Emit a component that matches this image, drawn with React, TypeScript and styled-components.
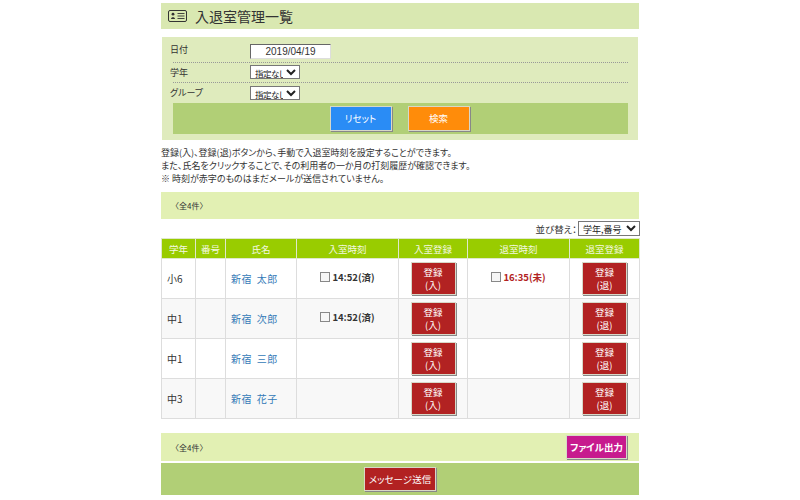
import React from 'react'
import styled, { createGlobalStyle } from 'styled-components'

const GlobalStyle = createGlobalStyle`
  html, body {
    margin: 0;
    padding: 0;
    background: #fff;
    font-family: "Noto Sans CJK JP", "Liberation Sans", sans-serif;
    font-size: 10px;
    color: #333;
    font-feature-settings: "palt";
  }
`

const Page = styled.div`
  width: 478px;
  margin: 0 auto;
  padding-top: 3px;
`

const TitleBar = styled.h1`
  display: flex;
  align-items: center;
  gap: 7px;
  height: 26px;
  margin: 0 0 8px;
  padding-left: 7px;
  background: #d9e8b1;
  font-size: 14px;
  font-weight: 400;
  font-feature-settings: normal;
  line-height: 26px;
  color: #333;
`

const FilterPanel = styled.div`
  margin: 0 1px;
  padding: 3px 10px 6px 11px;
  background: #dfebbd;
`

const FilterRow = styled.div<{ $height: number }>`
  display: flex;
  align-items: center;
  height: ${p => p.$height}px;
  border-bottom: 1px dotted #999;
`

const LastRow = styled(FilterRow)`
  border-bottom: none;
`

const FilterLabel = styled.label<{ $lift?: number }>`
  width: 77px;
  margin: ${p => -(p.$lift ?? 0)}px 3px 0 -3px;
  font-size: 9px;
`

const DateInput = styled.input`
  width: 81px;
  height: 15px;
  box-sizing: border-box;
  padding: 0;
  border: 1px solid #ddd;
  border-top-color: #666;
  border-left-color: #666;
  background: #fff;
  font: 10px "Liberation Sans", sans-serif;
  color: #333;
  text-align: center;
`

const SmallSelect = styled.select`
  width: 50px;
  height: 14px;
  padding: 0;
  margin-top: -1px;
  border: 1px solid #777;
  background: #fff;
  font: 8.5px "Noto Sans CJK JP", sans-serif;
  font-feature-settings: "palt";
  letter-spacing: -0.5px;
  color: #222;
`

const ButtonBand = styled.div`
  display: flex;
  justify-content: center;
  align-items: center;
  gap: 16px;
  height: 31px;
  padding-right: 2px;
  background: #b1cf76;
`

const ActionButton = styled.button<{ $bg: string; $width: number; $height: number }>`
  width: ${p => p.$width}px;
  height: ${p => p.$height}px;
  padding: 0;
  border: 1px solid #d8d8c8;
  box-shadow: 1px 1px 0 #888;
  background: ${p => p.$bg};
  color: #fff;
  font-family: "Noto Sans CJK JP", sans-serif;
  font-feature-settings: "palt";
  font-size: 9.5px;
  line-height: 13px;
`

const Notice = styled.div`
  margin: 6px 0 7px;
  font-size: 9px;
  line-height: 13px;
  color: #333;
`

const InfoBar = styled.div<{ $height: number }>`
  display: flex;
  justify-content: space-between;
  align-items: center;
  height: ${p => p.$height}px;
  padding: 0 12px 0 10px;
  background: #e2f0b3;
  font-size: 8px;
  font-feature-settings: normal;
`

const SortRow = styled.div`
  display: flex;
  justify-content: flex-end;
  align-items: center;
  gap: 1px;
  height: 19px;
  font-size: 9.5px;
`

const SortSelect = styled(SmallSelect)`
  width: 62px;
  height: 15px;
  margin-right: -1px;
  font-size: 9px;
  letter-spacing: 0;
`

const Table = styled.table`
  width: 478px;
  border-collapse: collapse;
  table-layout: fixed;
  margin-bottom: 14px;
`

const HeadCell = styled.th`
  height: 19px;
  padding: 0;
  border: 1px solid #dfe8cc;
  background: #9c0;
  color: #f4f9e0;
  font-size: 9.5px;
  font-weight: 400;
`

const Row = styled.tr`
  &:nth-child(even) td {
    background: #f8f8f8;
  }
`

const Cell = styled.td<{ $center?: boolean }>`
  height: 39px;
  padding: 0 0 0 ${p => (p.$center ? 0 : 5)}px;
  border: 1px solid #ddd;
  text-align: ${p => (p.$center ? 'center' : 'left')};
  font-size: 10px;
  color: #333;
`

const NameLink = styled.a`
  color: #337ab7;
  font-size: 10px;
  font-feature-settings: normal;
  letter-spacing: 0.5px;
  word-spacing: 2px;
  text-decoration: none;
`

const TimeStamp = styled.span<{ $late?: boolean }>`
  display: inline-flex;
  align-items: center;
  gap: 2px;
  margin-top: -6px;
  vertical-align: middle;
  font-size: 9.5px;
  font-weight: 700;
  color: ${p => (p.$late ? '#b22222' : '#333')};
`

const Check = styled.span`
  display: inline-block;
  width: 8px;
  height: 8px;
  border: 1px solid #888;
  background: #f6f6f6;
`

const BottomGap = styled.div`
  height: 2px;
`

const BottomBand = styled.div`
  display: flex;
  justify-content: center;
  align-items: center;
  height: 32px;
  background: #b1cf76;
`

const IdIcon = () => (
  <svg width="20" height="14" viewBox="0 0 20 14" fill="none" stroke="#333">
    <rect x="0.5" y="1.5" width="18" height="11" rx="1.5" />
    <circle cx="5" cy="5.2" r="1.4" fill="#333" stroke="none" />
    <path d="M3 10c0-2.4 4-2.4 4 0z" fill="#333" stroke="none" />
    <path d="M9.5 4.5h7M9.5 7h7M9.5 9.5h7" strokeWidth="0.9" />
  </svg>
)

const columns = [
  { label: '学年', width: 34 },
  { label: '番号', width: 30 },
  { label: '氏名', width: 71 },
  { label: '入室時刻', width: 102 },
  { label: '入室登録', width: 69 },
  { label: '退室時刻', width: 102 },
  { label: '退室登録', width: 70 },
]

const rows = [
  { grade: '小6', name: '新宿 太郎', inTime: '14:52(済)', outTime: '16:35(未)' },
  { grade: '中1', name: '新宿 次郎', inTime: '14:52(済)' },
  { grade: '中1', name: '新宿 三郎' },
  { grade: '中3', name: '新宿 花子' },
]

const RegisterButton = ({ kind }: { kind: string }) => (
  <ActionButton $bg="#b22222" $width={45} $height={33}>
    登録
    <br />({kind})
  </ActionButton>
)

export default function App() {
  return (
    <Page>
      <GlobalStyle />
      <TitleBar>
        <IdIcon />
        入退室管理一覧
      </TitleBar>

      <FilterPanel>
        <FilterRow $height={22}>
          <FilterLabel $lift={3}>日付</FilterLabel>
          <DateInput defaultValue="2019/04/19" />
        </FilterRow>
        <FilterRow $height={19}>
          <FilterLabel>学年</FilterLabel>
          <SmallSelect>
            <option>指定なし</option>
          </SmallSelect>
        </FilterRow>
        <LastRow $height={20}>
          <FilterLabel $lift={1}>グループ</FilterLabel>
          <SmallSelect>
            <option>指定なし</option>
          </SmallSelect>
        </LastRow>
        <ButtonBand>
          <ActionButton $bg="#2a8cf5" $width={62} $height={25}>リセット</ActionButton>
          <ActionButton $bg="#ff8c0a" $width={62} $height={25}>検索</ActionButton>
        </ButtonBand>
      </FilterPanel>

      <Notice>
        登録(入)、登録(退)ボタンから、手動で入退室時刻を設定することができます。
        <br />
        また、氏名をクリックすることで、その利用者の一か月の打刻履歴が確認できます。
        <br />
        ※ 時刻が赤字のものはまだメールが送信されていません。
      </Notice>

      <InfoBar $height={27}>〈全4件〉</InfoBar>

      <SortRow>
        並び替え：
        <SortSelect>
          <option>学年,番号</option>
        </SortSelect>
      </SortRow>

      <Table>
        <colgroup>
          {columns.map(c => (
            <col key={c.label} width={c.width} />
          ))}
        </colgroup>
        <thead>
          <tr>
            {columns.map(c => (
              <HeadCell key={c.label}>{c.label}</HeadCell>
            ))}
          </tr>
        </thead>
        <tbody>
          {rows.map((r, i) => (
            <Row key={i}>
              <Cell>{r.grade}</Cell>
              <Cell />
              <Cell>
                <NameLink href="#">{r.name}</NameLink>
              </Cell>
              <Cell $center>
                {r.inTime && (
                  <TimeStamp>
                    <Check />
                    {r.inTime}
                  </TimeStamp>
                )}
              </Cell>
              <Cell $center>
                <RegisterButton kind="入" />
              </Cell>
              <Cell $center>
                {r.outTime && (
                  <TimeStamp $late>
                    <Check />
                    {r.outTime}
                  </TimeStamp>
                )}
              </Cell>
              <Cell $center>
                <RegisterButton kind="退" />
              </Cell>
            </Row>
          ))}
        </tbody>
      </Table>

      <InfoBar $height={28}>
        〈全4件〉
        <ActionButton $bg="#c71a8e" $width={61} $height={24}>
          <b>ファイル出力</b>
        </ActionButton>
      </InfoBar>
      <BottomGap />
      <BottomBand>
        <ActionButton $bg="#b22222" $width={72} $height={24}>
          メッセージ送信
        </ActionButton>
      </BottomBand>
    </Page>
  )
}
